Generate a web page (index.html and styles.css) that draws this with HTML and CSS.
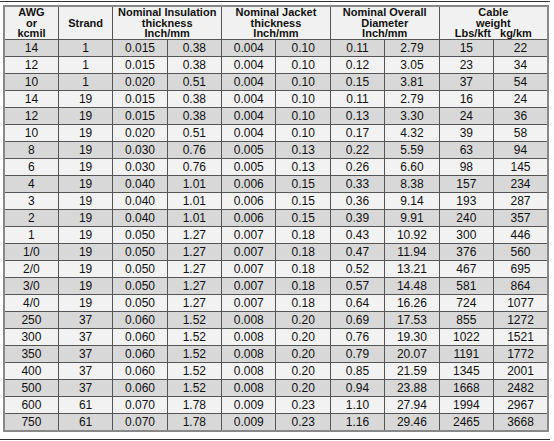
FILE: index.html
```html
<!DOCTYPE html>
<html lang="en">
<head>
    <meta charset="UTF-8">
    <meta name="viewport" content="width=device-width, initial-scale=1.0">
    <title>Cable Data</title>
    <link rel="stylesheet" href="styles.css">
</head>
<body>
    <div class="sheet">
        <div class="rule"></div>
        <table class="cable-table">
            <colgroup>
                <col><col><col><col><col><col><col><col><col><col>
            </colgroup>
            <thead>
                <tr>
                    <th>AWG<br>or<br>kcmil</th>
                    <th>Strand</th>
                    <th colspan="2">Nominal Insulation<br>thickness<br>Inch/mm</th>
                    <th colspan="2">Nominal Jacket<br>thickness<br>Inch/mm</th>
                    <th colspan="2">Nominal Overall<br>Diameter<br>Inch/mm</th>
                    <th colspan="2">Cable<br>weight<br>Lbs/kft&nbsp;&nbsp;&nbsp;kg/km</th>
                </tr>
            </thead>
            <tbody>
                <tr><td>14</td><td>1</td><td>0.015</td><td>0.38</td><td>0.004</td><td>0.10</td><td>0.11</td><td>2.79</td><td>15</td><td>22</td></tr>
                <tr><td>12</td><td>1</td><td>0.015</td><td>0.38</td><td>0.004</td><td>0.10</td><td>0.12</td><td>3.05</td><td>23</td><td>34</td></tr>
                <tr><td>10</td><td>1</td><td>0.020</td><td>0.51</td><td>0.004</td><td>0.10</td><td>0.15</td><td>3.81</td><td>37</td><td>54</td></tr>
                <tr><td>14</td><td>19</td><td>0.015</td><td>0.38</td><td>0.004</td><td>0.10</td><td>0.11</td><td>2.79</td><td>16</td><td>24</td></tr>
                <tr><td>12</td><td>19</td><td>0.015</td><td>0.38</td><td>0.004</td><td>0.10</td><td>0.13</td><td>3.30</td><td>24</td><td>36</td></tr>
                <tr><td>10</td><td>19</td><td>0.020</td><td>0.51</td><td>0.004</td><td>0.10</td><td>0.17</td><td>4.32</td><td>39</td><td>58</td></tr>
                <tr><td>8</td><td>19</td><td>0.030</td><td>0.76</td><td>0.005</td><td>0.13</td><td>0.22</td><td>5.59</td><td>63</td><td>94</td></tr>
                <tr><td>6</td><td>19</td><td>0.030</td><td>0.76</td><td>0.005</td><td>0.13</td><td>0.26</td><td>6.60</td><td>98</td><td>145</td></tr>
                <tr><td>4</td><td>19</td><td>0.040</td><td>1.01</td><td>0.006</td><td>0.15</td><td>0.33</td><td>8.38</td><td>157</td><td>234</td></tr>
                <tr><td>3</td><td>19</td><td>0.040</td><td>1.01</td><td>0.006</td><td>0.15</td><td>0.36</td><td>9.14</td><td>193</td><td>287</td></tr>
                <tr><td>2</td><td>19</td><td>0.040</td><td>1.01</td><td>0.006</td><td>0.15</td><td>0.39</td><td>9.91</td><td>240</td><td>357</td></tr>
                <tr><td>1</td><td>19</td><td>0.050</td><td>1.27</td><td>0.007</td><td>0.18</td><td>0.43</td><td>10.92</td><td>300</td><td>446</td></tr>
                <tr><td>1/0</td><td>19</td><td>0.050</td><td>1.27</td><td>0.007</td><td>0.18</td><td>0.47</td><td>11.94</td><td>376</td><td>560</td></tr>
                <tr><td>2/0</td><td>19</td><td>0.050</td><td>1.27</td><td>0.007</td><td>0.18</td><td>0.52</td><td>13.21</td><td>467</td><td>695</td></tr>
                <tr><td>3/0</td><td>19</td><td>0.050</td><td>1.27</td><td>0.007</td><td>0.18</td><td>0.57</td><td>14.48</td><td>581</td><td>864</td></tr>
                <tr><td>4/0</td><td>19</td><td>0.050</td><td>1.27</td><td>0.007</td><td>0.18</td><td>0.64</td><td>16.26</td><td>724</td><td>1077</td></tr>
                <tr><td>250</td><td>37</td><td>0.060</td><td>1.52</td><td>0.008</td><td>0.20</td><td>0.69</td><td>17.53</td><td>855</td><td>1272</td></tr>
                <tr><td>300</td><td>37</td><td>0.060</td><td>1.52</td><td>0.008</td><td>0.20</td><td>0.76</td><td>19.30</td><td>1022</td><td>1521</td></tr>
                <tr><td>350</td><td>37</td><td>0.060</td><td>1.52</td><td>0.008</td><td>0.20</td><td>0.79</td><td>20.07</td><td>1191</td><td>1772</td></tr>
                <tr><td>400</td><td>37</td><td>0.060</td><td>1.52</td><td>0.008</td><td>0.20</td><td>0.85</td><td>21.59</td><td>1345</td><td>2001</td></tr>
                <tr><td>500</td><td>37</td><td>0.060</td><td>1.52</td><td>0.008</td><td>0.20</td><td>0.94</td><td>23.88</td><td>1668</td><td>2482</td></tr>
                <tr><td>600</td><td>61</td><td>0.070</td><td>1.78</td><td>0.009</td><td>0.23</td><td>1.10</td><td>27.94</td><td>1994</td><td>2967</td></tr>
                <tr><td>750</td><td>61</td><td>0.070</td><td>1.78</td><td>0.009</td><td>0.23</td><td>1.16</td><td>29.46</td><td>2465</td><td>3668</td></tr>
            </tbody>
        </table>
        <div class="rule rule-bottom"></div>
    </div>
</body>
</html>
```

FILE: styles.css
```css
body {
    margin: 0;
    background: #fff;
    font-family: "Liberation Sans", Arial, sans-serif;
    color: #111;
}

.sheet {
    width: 554px;
    padding-top: 1px;
}

.rule {
    width: 550px;
    height: 1px;
    background: #333;
}

.rule-bottom {
    margin-top: 7px;
}

.cable-table {
    margin: 3px 0 0 3px;
    width: 546px;
    table-layout: fixed;
    border-collapse: collapse;
    border: 2px solid #888;
}

.cable-table th,
.cable-table td {
    border: 1px solid #555;
    padding: 0;
    text-align: center;
}

.cable-table th {
    font-size: 11px;
    font-weight: bold;
    line-height: 10.5px;
    height: 32px;
    background: #f1f1f1;
}

.cable-table td {
    font-size: 12px;
    height: 16px;
    line-height: 16px;
}

.cable-table tbody tr:nth-child(odd) td {
    background: #d8d8d8;
}

.cable-table tbody tr:nth-child(even) td {
    background: #f2f2f2;
}
```
